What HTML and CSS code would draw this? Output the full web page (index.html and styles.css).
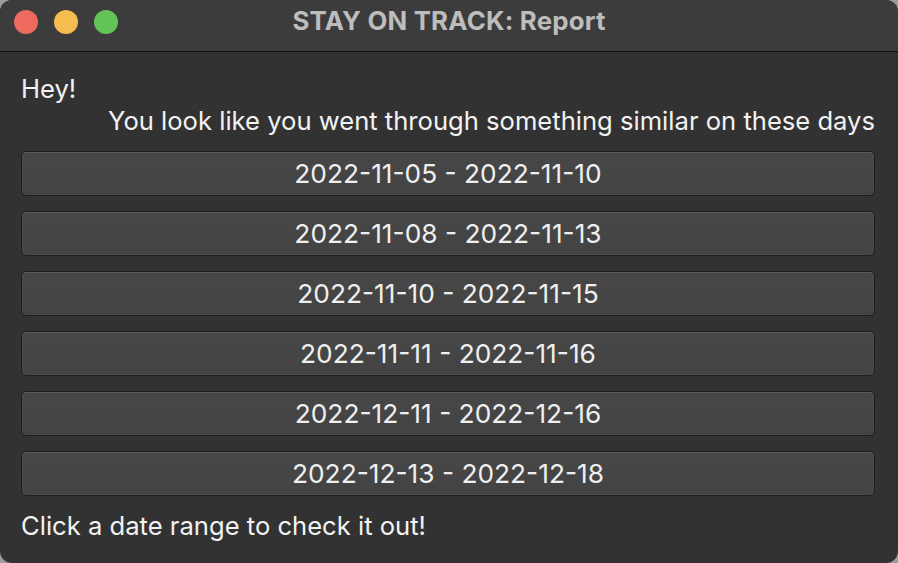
FILE: index.html
```html
<!DOCTYPE html>
<html>
<head>
<meta charset="utf-8">
<link rel="stylesheet" href="styles.css">
</head>
<body>
<div class="window">
  <div class="titlebar">
    <div class="lights">
      <span class="light red"></span>
      <span class="light yellow"></span>
      <span class="light green"></span>
    </div>
    <div class="title">STAY ON TRACK: Report</div>
  </div>
  <div class="content">
    <div class="hey">Hey!</div>
    <div class="sub">You look like you went through something similar on these days</div>
    <div class="list">
      <button class="range">2022-11-05 - 2022-11-10</button>
      <button class="range">2022-11-08 - 2022-11-13</button>
      <button class="range">2022-11-10 - 2022-11-15</button>
      <button class="range">2022-11-11 - 2022-11-16</button>
      <button class="range">2022-12-11 - 2022-12-16</button>
      <button class="range">2022-12-13 - 2022-12-18</button>
    </div>
    <div class="foot">Click a date range to check it out!</div>
  </div>
</div>
</body>
</html>
```

FILE: styles.css
```css
html, body {
  margin: 0;
  padding: 0;
  width: 898px;
  height: 563px;
  background: #9c9c9c;
  overflow: hidden;
}
.window {
  width: 898px;
  height: 563px;
  box-sizing: border-box;
  border-radius: 12px;
  overflow: hidden;
  background: #323232;
  font-family: "Inter", "Liberation Sans", sans-serif;
  color: #f2f2f2;
  display: flex;
  flex-direction: column;
}
.titlebar {
  height: 51px;
  background: #3c3c3c;
  border-bottom: 1px solid #101010;
  display: flex;
  align-items: center;
  position: relative;
  flex-shrink: 0;
}
.lights {
  display: flex;
  gap: 16px;
  padding-left: 14px;
  padding-bottom: 7px;
}
.light {
  width: 24px;
  height: 24px;
  border-radius: 50%;
  display: block;
}
.red { background: #ee6a5f; }
.yellow { background: #f5bd4f; }
.green { background: #61c454; }
.title {
  position: absolute;
  left: 0;
  right: 0;
  top: 6px;
  text-align: center;
  font-weight: 700;
  font-size: 25.8px;
  line-height: 30px;
  color: #bdbdbd;
  letter-spacing: 0.2px;
}
.content {
  padding: 22px 23px 0 21px;
  display: flex;
  flex-direction: column;
}
.hey {
  font-size: 25.6px;
  line-height: 30px;
}
.sub {
  font-size: 25.6px;
  line-height: 30px;
  text-align: right;
  margin-top: 2px;
}
.list {
  display: flex;
  flex-direction: column;
  gap: 15px;
  margin-top: 15px;
}
.range {
  height: 45px;
  margin: 0;
  padding: 0;
  border: 1px solid #1e1e1e;
  border-radius: 5px;
  background: linear-gradient(#474747, #434343);
  box-shadow: inset 0 1px 0 #5c5c5c, inset 0 0 0 1px #4a4a4a;
  color: #efefef;
  font-family: "Inter", "Liberation Sans", sans-serif;
  font-size: 26.3px;
  text-align: center;
}
.foot {
  font-size: 25.6px;
  line-height: 30px;
  margin-top: 15px;
}
```
